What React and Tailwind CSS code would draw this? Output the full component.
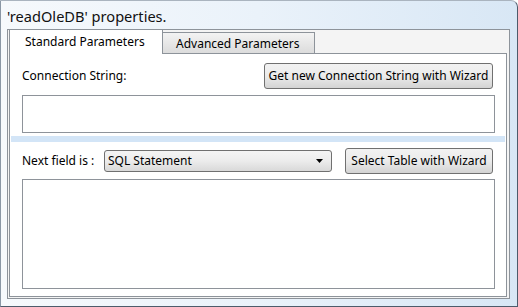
export default function App() {
  const font = { fontFamily: '"Noto Sans", "Open Sans", sans-serif' };
  return (
    <div className="w-[518px] h-[307px] overflow-hidden text-black whitespace-nowrap" style={font}>
      <div className="w-[518px] h-[307px] border border-[#4d5b6b] border-t-[#aab4bf] border-l-[#8a97a5] rounded-tr-[7px] bg-gradient-to-r from-[#f6f9fc] via-[#eaf2fa] to-[#d8e7f5] flex flex-col">
        <div className="h-[28px] pl-[6px] pt-[5px] text-[14.6px] leading-[20px] text-[#111]">'readOleDB' properties.</div>
        <div className="ml-[6px] w-[503px] h-[270px] border border-[#8d939a] bg-[#f4f4f4] flex flex-col pl-px pr-[2px]">
          <div className="flex items-start h-[23px] relative z-10">
            <div className="w-[154px] h-[24px] bg-white border-x border-[#8d939a] text-[12px] leading-[24px] pl-[15px]">Standard Parameters</div>
            <div className="mt-[2px] w-[152px] h-[21px] border-t border-r border-[#8d939a] bg-gradient-to-b from-[#f3f3f3] to-[#dcdcdc] text-[12px] leading-[21px] pl-[13px]">Advanced Parameters</div>
          </div>
          <div className="h-[244px] bg-white border border-[#8d939a] flex flex-col">
            <div className="flex items-center justify-between h-[41px] pl-[12px] pr-[13px] pt-[2px]">
              <span className="text-[12px]">Connection String:</span>
              <button className="w-[229px] h-[26px] border border-[#707070] rounded-[3px] bg-gradient-to-b from-[#f2f2f2] via-[#ebebeb] to-[#d3d3d3] text-[12px] leading-[22px] text-black">Get new Connection String with Wizard</button>
            </div>
            <div className="ml-[12px] mr-[11px] h-[38px] border border-[#8e939a] bg-white"></div>
            <div className="mt-[3px] mx-px h-[6px] bg-[#d3e5f7]"></div>
            <div className="flex items-center h-[37px] pl-[12px] pr-[13px]">
              <span className="text-[12px] w-[82px]">Next field is :</span>
              <div className="w-[228px] h-[22px] border border-[#707070] rounded-[3px] bg-gradient-to-b from-[#f4f4f4] via-[#ececec] to-[#d9d9d9] flex items-center justify-between pl-[3px] pr-[7px]">
                <span className="text-[12px] leading-[20px]">SQL Statement</span>
                <svg width="8" height="4" viewBox="0 0 8 4"><path d="M0 0 H7 L3.5 4 Z" fill="#000" /></svg>
              </div>
              <div className="flex-1"></div>
              <button className="w-[148px] h-[26px] border border-[#707070] rounded-[3px] bg-gradient-to-b from-[#f2f2f2] via-[#ebebeb] to-[#d3d3d3] text-[12px] leading-[22px] text-black">Select Table with Wizard</button>
            </div>
            <div className="ml-[12px] mr-[11px] h-[110px] border border-[#8e939a] bg-white"></div>
          </div>
        </div>
      </div>
    </div>
  );
}
